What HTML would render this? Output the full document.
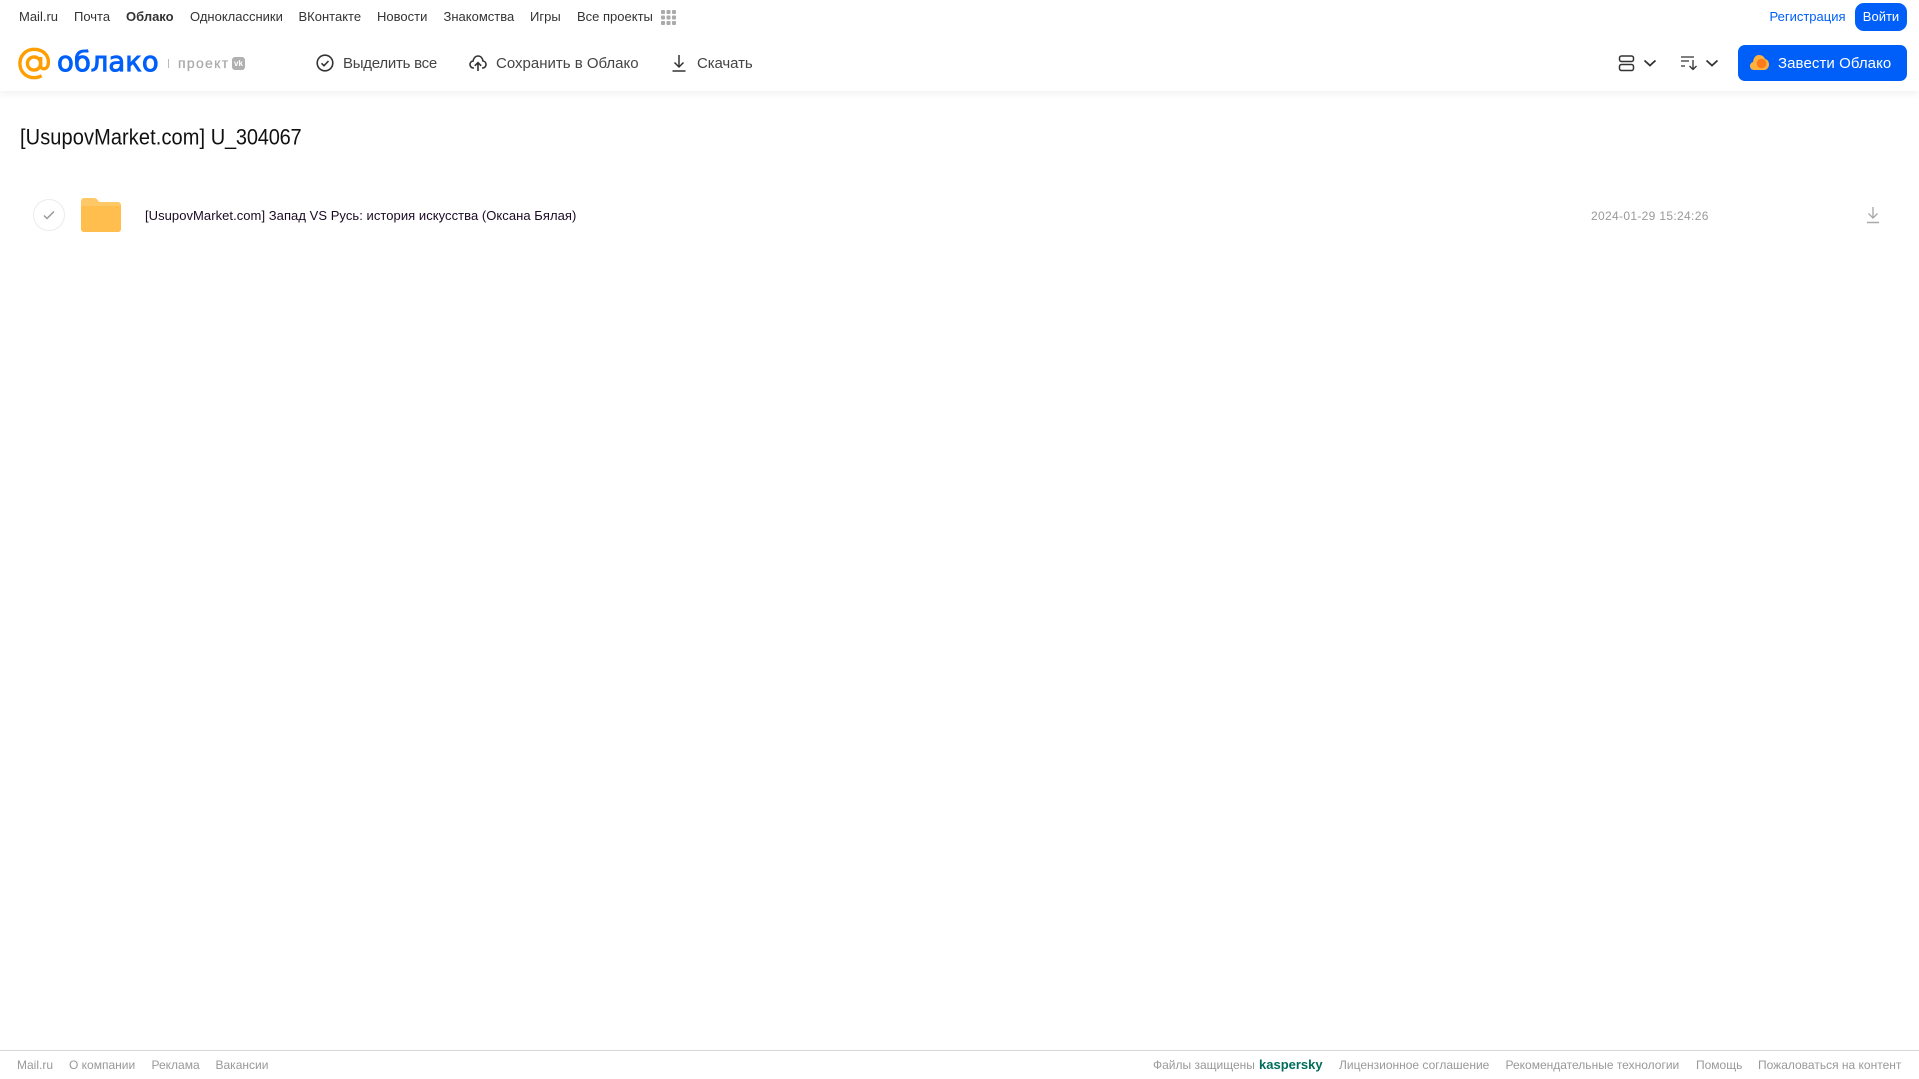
<!DOCTYPE html>
<html lang="ru"><head><meta charset="utf-8"><title>Облако</title>
<style>
html,body{margin:0;padding:0;background:#fff}
body{width:1919px;height:1079px;position:relative;overflow:hidden;font-family:"Liberation Sans",Arial,sans-serif}
.t{position:absolute;white-space:nowrap;line-height:20px}
.n{top:7px;font-size:13px;color:#333}
.b{top:53.500px;font-size:15px;color:#444}
.f{top:1055px;font-size:12px;color:#999}
svg{position:absolute;display:block}
#hdr{position:absolute;left:0;top:0;width:1919px;height:91px;background:#fff;box-shadow:0 2px 8px rgba(0,0,0,.07)}
</style></head><body>
<div id="hdr"></div>
<div class="t n" style="left:19px">Mail.ru</div>
<div class="t n" style="left:74px">Почта</div>
<div class="t n" style="left:126px;font-weight:bold">Облако</div>
<div class="t n" style="left:190px">Одноклассники</div>
<div class="t n" style="left:298.500px">ВКонтакте</div>
<div class="t n" style="left:377px">Новости</div>
<div class="t n" style="left:443.500px">Знакомства</div>
<div class="t n" style="left:530px">Игры</div>
<div class="t n" style="left:577px">Все проекты</div>
<svg style="left:661px;top:10px" width="15" height="15" fill="#aaa"><rect width="4" height="4" rx="1"/><rect x="5.500" width="4" height="4" rx="1"/><rect x="11" width="4" height="4" rx="1"/><rect y="5.500" width="4" height="4" rx="1"/><rect x="5.500" y="5.500" width="4" height="4" rx="1"/><rect x="11" y="5.500" width="4" height="4" rx="1"/><rect y="11" width="4" height="4" rx="1"/><rect x="5.500" y="11" width="4" height="4" rx="1"/><rect x="11" y="11" width="4" height="4" rx="1"/></svg>
<div class="t n" style="left:1769.500px;color:#005ff9">Регистрация</div>
<div class="t" style="left:1855px;top:3px;width:52px;height:28px;line-height:27px;background:#005ff9;border-radius:9px;color:#fff;font-size:13px;text-align:center">Войти</div>

<svg style="left:18px;top:47px" width="33" height="33" viewBox="0 0 35 34" fill="none" stroke="#ff9e00" stroke-width="3.600"><circle cx="17" cy="17" r="7"/><path d="M24 10v9c0 5 7 5 8-1 1.500-9-5-16-15-16C8 2 2 9 2 17s6 15 15 15c3 0 5.500-.6 8-2"/></svg>
<div class="t" style="left:57px;top:44px;line-height:36px;font-size:27.500px;color:#005ff9;font-family:'DejaVu Sans',sans-serif;-webkit-text-stroke:.9px #005ff9">облако</div>
<div style="position:absolute;left:168px;top:59px;width:1px;height:9px;background:#bbb"></div>
<div class="t" style="left:178px;top:53px;font-size:14px;color:#aaa;letter-spacing:1.300px;-webkit-text-stroke:.25px #aaa">проект</div>
<div class="t" style="left:232px;top:57px;width:13px;height:13px;line-height:13px;border-radius:3px;background:#b0b0b0;color:#fff;font-size:8px;font-weight:bold;text-align:center">vk</div>

<svg style="left:316px;top:54px" width="18" height="18" fill="none" stroke="#333" stroke-width="1.600"><circle cx="9" cy="9" r="7.800"/><path d="M5.500 9.300l2.500 2.400 4.500-4.700"/></svg>
<div class="t b" style="left:343px;letter-spacing:-.25px">Выделить все</div>
<svg style="left:469px;top:54px" width="18" height="18" fill="none" stroke="#333" stroke-width="1.600"><path d="M5 14H4.500C2.500 14 1 12.500 1 10.500c0-1.800 1.300-3.200 3-3.400C4.700 4 6.500 2 9 2s4.500 2 5 5c1.700.2 3 1.700 3 3.500 0 2-1.500 3.500-3.500 3.500H13"/><path d="M9 17V9M5.800 11.800L9 8.600l3.200 3.200"/></svg>
<div class="t b" style="left:496px">Сохранить в Облако</div>
<svg style="left:670px;top:54px" width="18" height="18" fill="none" stroke="#333" stroke-width="1.500"><path d="M9 1v12M4.500 8.500L9 13l4.500-4.500M2.500 17h13"/></svg>
<div class="t b" style="left:697px;letter-spacing:-.1px">Скачать</div>

<svg style="left:1617.500px;top:55px" width="17" height="17" fill="none" stroke="#333" stroke-width="1.500"><rect x="1.500" y="1" width="14" height="5.500" rx="2"/><rect x="1.500" y="9.500" width="14" height="6" rx="2"/></svg>
<svg style="left:1643px;top:59px" width="14" height="8" fill="none" stroke="#333" stroke-width="1.800"><path d="M1.500 1.500L7 6.500l5.500-5"/></svg>
<svg style="left:1680px;top:55px" width="18" height="16" fill="none" stroke="#333" stroke-width="1.300"><path d="M1 2h13M1 6h8M1 11h4M13 5v9.500M9.500 11l3.500 3.500 3.500-3.500"/></svg>
<svg style="left:1705px;top:59px" width="14" height="8" fill="none" stroke="#333" stroke-width="1.800"><path d="M1.500 1.500L7 6.500l5.500-5"/></svg>
<div style="position:absolute;left:1738px;top:45px;width:169px;height:36px;background:#005ff9;border-radius:7px"></div>
<svg style="left:1750px;top:54px" width="19" height="17"><path d="M4 16C1.500 16 0 14.200 0 12c0-2 1.200-3.500 3-4C3.500 4 5.500 1 9 1c3 0 5 1.500 6 4 2.500.5 4 2.500 4 5.500 0 3-2 5.500-5 5.500z" fill="#ffb13d"/><circle cx="11.500" cy="9.500" r="4.800" fill="#ff7a1a"/></svg>
<div class="t" style="left:1778px;top:53.500px;font-size:15px;color:#fff;letter-spacing:.08px">Завести Облако</div>

<div class="t" style="left:20px;top:124px;line-height:28px;font-size:20px;color:#111;transform-origin:0 50%;transform:scale(1,1.100)"><span style="letter-spacing:.1px">[UsupovMarket.com]</span> <span style="letter-spacing:-.2px">U_304067</span></div>

<div style="position:absolute;left:33px;top:199px;width:30px;height:30px;border:1px solid #ebebeb;border-radius:50%"></div>
<svg style="left:42px;top:209px" width="14" height="12" fill="none" stroke="#999" stroke-width="1.500"><path d="M2 6.500l3 3 7-7"/></svg>
<svg style="left:81px;top:198px" width="40" height="34"><path d="M0 3a3 3 0 0 1 3-3h10c2 0 3 1 4 2.500S19 4 21 4h16a3 3 0 0 1 3 3v24a3 3 0 0 1-3 3H3a3 3 0 0 1-3-3z" fill="#ffc866"/><path d="M0 8h40v23a3 3 0 0 1-3 3H3a3 3 0 0 1-3-3z" fill="#ffbe4d"/></svg>
<div class="t" style="left:145px;top:206px;font-size:13px;color:#1c0a26;letter-spacing:.05px">[UsupovMarket.com] Запад VS Русь: история искусства (Оксана Бялая)</div>
<div class="t" style="left:1591px;top:206px;font-size:12px;color:#999;letter-spacing:.33px">2024-01-29 15:24:26</div>
<svg style="left:1866px;top:206px" width="14" height="18" fill="none" stroke="#aaa" stroke-width="1.400"><path d="M7 1v11M2.500 7.500L7 12l4.500-4.500M1 16.500h12"/></svg>

<div style="position:absolute;left:0;top:1050px;width:1919px;height:1px;background:#d8d8d8"></div>
<div class="t f" style="left:17px">Mail.ru</div>
<div class="t f" style="left:69px">О компании</div>
<div class="t f" style="left:151.500px">Реклама</div>
<div class="t f" style="left:215.500px">Вакансии</div>
<div class="t f" style="left:1153px">Файлы защищены</div>
<div class="t" style="left:1259px;top:1055px;font-size:13px;font-weight:bold;color:#006d5c">kaspersky</div>
<div class="t f" style="left:1339px">Лицензионное соглашение</div>
<div class="t f" style="left:1505.500px">Рекомендательные технологии</div>
<div class="t f" style="left:1696px">Помощь</div>
<div class="t f" style="left:1758px">Пожаловаться на контент</div>
</body></html>
